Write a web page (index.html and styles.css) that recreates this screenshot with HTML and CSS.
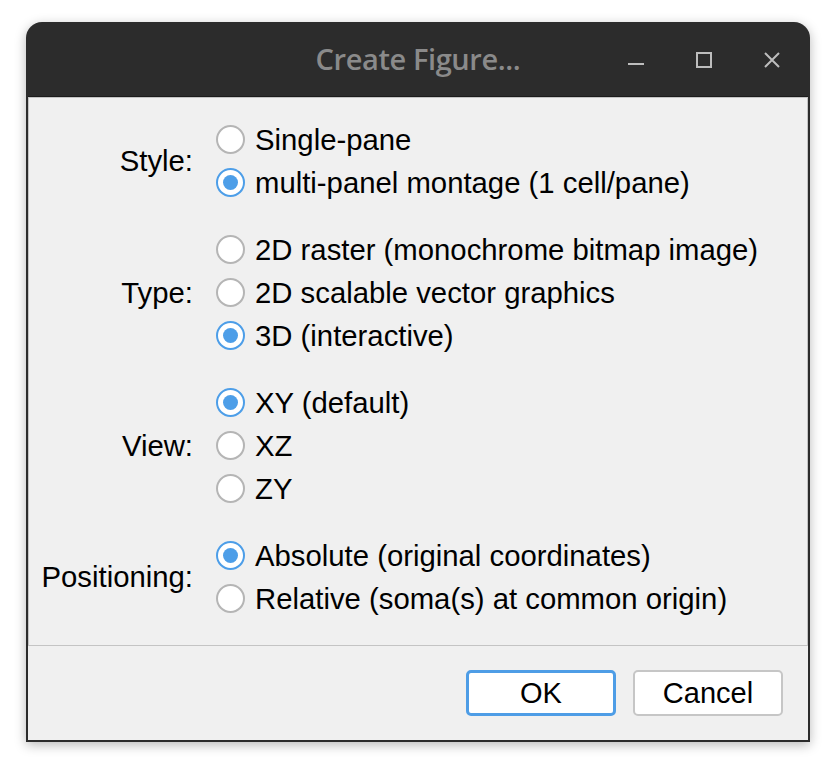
FILE: index.html
```html
<!DOCTYPE html>
<html>
<head>
<meta charset="utf-8">
<title>Create Figure...</title>
<link rel="stylesheet" href="styles.css">
</head>
<body>
<div class="window">
  <div class="titlebar">
    <div class="tb-side"></div>
    <div class="tb-title">Create Figure...</div>
    <div class="tb-side tb-controls">
      <svg class="ctl" width="16" height="16" viewBox="0 0 16 16"><line x1="0" y1="12" x2="16" y2="12" stroke="#bdbdbd" stroke-width="2"/></svg>
      <svg class="ctl" width="16" height="16" viewBox="0 0 16 16"><rect x="1" y="1" width="14" height="14" fill="none" stroke="#bdbdbd" stroke-width="2"/></svg>
      <svg class="ctl" width="16" height="16" viewBox="0 0 16 16"><path d="M1 1 L15 15 M15 1 L1 15" stroke="#bdbdbd" stroke-width="2"/></svg>
    </div>
  </div>
  <div class="content">
    <div class="panel">
      <div class="group">
        <div class="label">Style:</div>
        <div class="options">
          <div class="opt"><span class="radio"></span>Single-pane</div>
          <div class="opt"><span class="radio checked"></span>multi-panel montage (1 cell/pane)</div>
        </div>
      </div>
      <div class="group">
        <div class="label">Type:</div>
        <div class="options">
          <div class="opt"><span class="radio"></span>2D raster (monochrome bitmap image)</div>
          <div class="opt"><span class="radio"></span>2D scalable vector graphics</div>
          <div class="opt"><span class="radio checked"></span>3D (interactive)</div>
        </div>
      </div>
      <div class="group">
        <div class="label">View:</div>
        <div class="options">
          <div class="opt"><span class="radio checked"></span>XY (default)</div>
          <div class="opt"><span class="radio"></span>XZ</div>
          <div class="opt"><span class="radio"></span>ZY</div>
        </div>
      </div>
      <div class="group">
        <div class="label">Positioning:</div>
        <div class="options">
          <div class="opt"><span class="radio checked"></span>Absolute (original coordinates)</div>
          <div class="opt"><span class="radio"></span>Relative (soma(s) at common origin)</div>
        </div>
      </div>
    </div>
    <div class="footer">
      <button class="btn btn-default">OK</button>
      <button class="btn">Cancel</button>
    </div>
  </div>
</div>
</body>
</html>
```

FILE: styles.css
```css
html, body {
  margin: 0;
  padding: 0;
  background: #ffffff;
}
body {
  padding: 22px 26px;
  font-family: "Liberation Sans", Arial, sans-serif;
}
.window {
  width: 784px;
  height: 720px;
  box-sizing: border-box;
  background: #2c2c2c;
  border-radius: 16px 16px 0 0;
  padding: 0 2px 2px 2px;
  display: flex;
  flex-direction: column;
  box-shadow: 0 3px 12px rgba(0, 0, 0, 0.28);
}
.titlebar {
  height: 74px;
  border-bottom: 1px solid #1c1c1c;
  display: grid;
  grid-template-columns: 1fr auto 1fr;
  align-items: center;
  flex: none;
}
.tb-title {
  font-family: "Open Sans", "DejaVu Sans", sans-serif;
  font-weight: 600;
  font-size: 29px;
  color: #8a8a8a;
  letter-spacing: -0.4px;
  padding-bottom: 2px;
}
.tb-controls {
  display: flex;
  justify-content: flex-end;
  gap: 52px;
  padding-right: 28px;
  padding-top: 2px;
}
.ctl {
  display: block;
}
.content {
  flex: 1;
  background: #f0f0f0;
  display: flex;
  flex-direction: column;
}
.panel {
  border: 1px solid #c4c4c4;
  padding: 20px 0 25px 0;
  display: flex;
  flex-direction: column;
  gap: 24px;
}
.group {
  display: grid;
  grid-template-columns: 164px auto;
  column-gap: 23px;
  align-items: center;
}
.label {
  text-align: right;
  font-size: 29.3px;
  color: #000;
}
.options {
  display: flex;
  flex-direction: column;
}
.opt {
  height: 43px;
  display: flex;
  align-items: center;
  font-size: 29.3px;
  color: #000;
  white-space: nowrap;
}
.radio {
  width: 29px;
  height: 29px;
  box-sizing: border-box;
  border: 2px solid #b5b5b5;
  border-radius: 50%;
  background: #ffffff;
  margin-right: 10px;
  flex: none;
  display: flex;
  align-items: center;
  justify-content: center;
}
.radio.checked {
  border-color: #4d9ee8;
}
.radio.checked::after {
  content: "";
  width: 15px;
  height: 15px;
  border-radius: 50%;
  background: #4d9ee8;
}
.footer {
  flex: 1;
  display: flex;
  justify-content: flex-end;
  align-items: flex-start;
  gap: 17px;
  padding: 24px 25px 0 0;
}
.btn {
  width: 150px;
  height: 46px;
  box-sizing: border-box;
  background: #ffffff;
  border: 2px solid #c6c6c6;
  border-radius: 5px;
  font-family: "Liberation Sans", Arial, sans-serif;
  font-size: 29px;
  color: #000;
  padding: 0;
}
.btn-default {
  border: 3px solid #4e9de6;
}
```
